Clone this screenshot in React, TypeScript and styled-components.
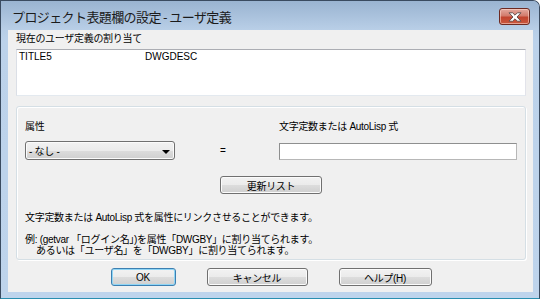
import React from 'react'
import styled, { createGlobalStyle } from 'styled-components'

const GlobalStyle = createGlobalStyle`
  html, body {
    margin: 0;
    padding: 0;
    background: #ffffff;
  }
  body {
    font-family: "Liberation Sans", "Noto Sans CJK JP", sans-serif;
    font-size: 10px;
    color: #000000;
  }
  * {
    box-sizing: border-box;
  }
`

const Window = styled.div`
  width: 540px;
  height: 299px;
  display: flex;
  flex-direction: column;
  border: 1px solid #3a4b60;
  border-bottom-color: #2a8fb0;
  border-radius: 0 7px 0 0;
  background: linear-gradient(180deg, #a9c1dc 0px, #bcd2ea 40px, #bed4ec 100%);
  overflow: hidden;
`

const TitleBar = styled.div`
  height: 29px;
  flex: none;
  display: flex;
  align-items: center;
  justify-content: space-between;
  padding: 0 9px 0 11px;
  background: linear-gradient(180deg, #9ab4d1 0%, #a9c1dc 50%, #b9cfe7 100%);
`

const Title = styled.span`
  font-family: "Noto Sans CJK JP", sans-serif;
  font-size: 13px;
  letter-spacing: -0.6px;
  color: #1b1b1b;
  margin-top: 1px;
`

const CloseButton = styled.div`
  width: 31px;
  height: 17px;
  margin-top: 2px;
  display: flex;
  align-items: center;
  justify-content: center;
  border: 1px solid #6d2a22;
  border-radius: 3px;
  background: linear-gradient(180deg, #e3a99f 0%, #d27b6c 45%, #c2442f 55%, #c9583f 100%);
  box-shadow: inset 0 0 0 1px rgba(255, 220, 210, 0.55);
`

const Client = styled.div`
  flex: 1;
  margin: 0 6px 6px 7px;
  padding: 2px 7px 0 8px;
  background: #f0f0f0;
  display: flex;
  flex-direction: column;
`

const Label = styled.div<{ $indent?: number }>`
  height: 14px;
  line-height: 14px;
  white-space: nowrap;
  letter-spacing: -0.3px;
  padding-left: ${p => p.$indent ?? 0}px;
`

const ListBox = styled.div`
  margin-top: 3px;
  height: 47px;
  background: #ffffff;
  border: 1px solid;
  border-color: #abadb3 #e2e3ea #e3e9ef #dbdfe6;
  padding: 1px 2px;
`

const ListRow = styled.div`
  display: grid;
  grid-template-columns: 126px 1fr;
  line-height: 12px;
  font-size: 10px;
`

const GroupPanel = styled.div`
  margin-top: 10px;
  height: 154px;
  border: 1px solid #d5dfe5;
  border-radius: 3px;
  box-shadow: inset 1px 1px 0 #ffffff, 1px 1px 0 #ffffff;
  padding: 13px 8px 0 8px;
  display: flex;
  flex-direction: column;
`

const FieldGrid = styled.div`
  display: grid;
  grid-template-columns: 150px 104px 238px;
  grid-template-rows: 14px 19px;
  row-gap: 7px;
  align-items: center;
`

const Equals = styled.span`
  padding-left: 45px;
  font-size: 10px;
`

const Combo = styled.div`
  height: 19px;
  display: flex;
  align-items: center;
  justify-content: space-between;
  padding: 0 4px 0 3px;
  border: 1px solid #707070;
  border-radius: 3px;
  background: linear-gradient(180deg, #f2f2f2 0%, #ebebeb 50%, #dddddd 50%, #cfcfcf 100%);
  box-shadow: inset 0 0 0 1px #fbfbfb;
  letter-spacing: -0.3px;
`

const Arrow = styled.span`
  width: 0;
  height: 0;
  border-left: 4px solid transparent;
  border-right: 4px solid transparent;
  border-top: 4px solid #000000;
  margin-top: 2px;
`

const TextInput = styled.div`
  height: 17px;
  margin-top: 2px;
  background: #ffffff;
  border: 1px solid;
  border-color: #8e8f8f #b7b7b7 #b7b7b7 #8e8f8f;
`

const Button = styled.div<{ $width: number; $default?: boolean }>`
  width: ${p => p.$width}px;
  height: 18px;
  display: flex;
  align-items: center;
  justify-content: center;
  border: 1px solid ${p => (p.$default ? '#3c7fb1' : '#707070')};
  border-radius: 3px;
  background: linear-gradient(180deg, #f2f2f2 0%, #ebebeb 50%, #dddddd 50%, #cfcfcf 100%);
  box-shadow: inset 0 0 0 1px ${p => (p.$default ? '#8fd5f5' : '#fbfbfb')};
  letter-spacing: -0.3px;
  white-space: nowrap;
`

const UpdateRow = styled.div`
  margin-top: 16px;
  display: flex;
  justify-content: center;
`

const Info = styled.div`
  margin-top: 18px;
  line-height: 12px;
  letter-spacing: -0.3px;
  white-space: nowrap;
`

const Example = styled.div`
  margin-top: 10px;
  line-height: 11px;
  letter-spacing: -0.3px;
  white-space: nowrap;
`

const ButtonRow = styled.div`
  margin-top: 8px;
  display: flex;
  justify-content: center;
  gap: 31px;
`

function CloseGlyph() {
  return (
    <svg width="14" height="10" viewBox="0 0 14 10">
      <path
        d="M1 0.8 H4.6 L7 3.2 L9.4 0.8 H13 L9 5 L13 9.2 H9.4 L7 6.8 L4.6 9.2 H1 L5 5 Z"
        fill="#ffffff"
        stroke="#5a4a48"
        strokeWidth="0.9"
        strokeLinejoin="round"
      />
    </svg>
  )
}

export default function App() {
  return (
    <>
      <GlobalStyle />
      <Window>
        <TitleBar>
          <Title>プロジェクト表題欄の設定 - ユーザ定義</Title>
          <CloseButton>
            <CloseGlyph />
          </CloseButton>
        </TitleBar>
        <Client>
          <Label>現在のユーザ定義の割り当て</Label>
          <ListBox>
            <ListRow>
              <span>TITLE5</span>
              <span>DWGDESC</span>
            </ListRow>
          </ListBox>
          <GroupPanel>
            <FieldGrid>
              <Label>属性</Label>
              <span />
              <Label>文字定数または AutoLisp 式</Label>
              <Combo>
                <span>- なし -</span>
                <Arrow />
              </Combo>
              <Equals>=</Equals>
              <TextInput />
            </FieldGrid>
            <UpdateRow>
              <Button $width={102}>更新リスト</Button>
            </UpdateRow>
            <Info>文字定数または AutoLisp 式を属性にリンクさせることができます。</Info>
            <Example>
              <div>例: (getvar 「ログイン名」)を属性「DWGBY」に割り当てられます。</div>
              <Label $indent={11} as="div" style={{ height: 11, lineHeight: '11px' }}>
                あるいは「ユーザ名」を「DWGBY」に割り当てられます。
              </Label>
            </Example>
          </GroupPanel>
          <ButtonRow>
            <Button $width={65} $default>OK</Button>
            <Button $width={101}>キャンセル</Button>
            <Button $width={93}>ヘルプ(H)</Button>
          </ButtonRow>
        </Client>
      </Window>
    </>
  )
}
